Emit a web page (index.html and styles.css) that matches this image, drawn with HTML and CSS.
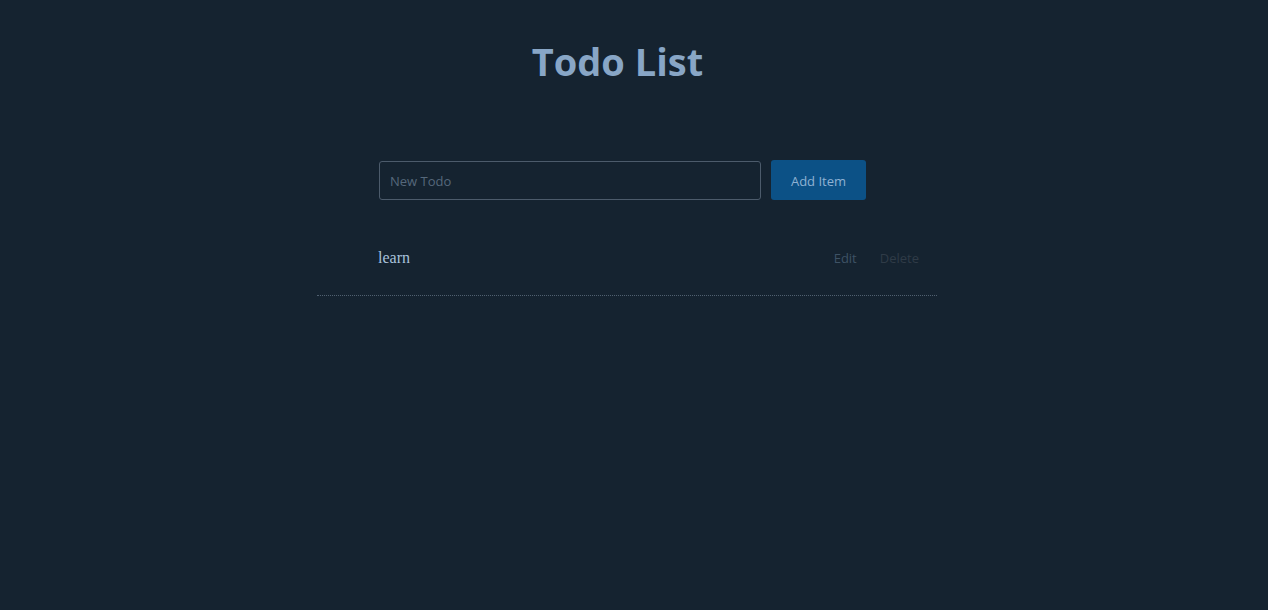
FILE: index.html
```html
<!DOCTYPE html>
<html lang="en">
<head>
<meta charset="utf-8">
<title>Todo List</title>
<link rel="stylesheet" href="styles.css">
</head>
<body>
<main class="app">
  <h1 class="title">Todo List</h1>
  <form class="add-form">
    <input class="add-input" type="text" placeholder="New Todo">
    <button class="add-btn" type="button">Add Item</button>
  </form>
  <ul class="todo-list">
    <li class="todo-item">
      <span class="todo-text">learn</span>
      <div class="todo-actions">
        <button class="link-btn edit" type="button">Edit</button>
        <button class="link-btn delete" type="button">Delete</button>
      </div>
    </li>
  </ul>
</main>
</body>
</html>
```
FILE: styles.css
```css
html, body {
  margin: 0;
  padding: 0;
  background: #152330;
  height: 100%;
}
body {
  font-family: "Open Sans", "Noto Sans", sans-serif;
}
.app {
  width: 620px;
  margin: 0 auto;
  padding-right: 14px;
}
.title {
  margin: 0;
  padding: 35px 19px 0 0;
  text-align: center;
  font-size: 38px;
  line-height: 52px;
  font-weight: 700;
  color: #88a6c6;
}
.add-form {
  display: flex;
  gap: 10px;
  margin: 73px 0 0 62px;
  align-items: center;
}
.add-input {
  box-sizing: border-box;
  width: 382px;
  height: 39px;
  padding: 2px 10px 0;
  background: #152330;
  border: 1px solid #4c5b6b;
  border-radius: 3px;
  color: #a8c0d8;
  font-family: "Open Sans", "Noto Sans", sans-serif;
  font-size: 13px;
  outline: none;
}
.add-input::placeholder {
  color: #55687b;
}
.add-btn {
  box-sizing: border-box;
  width: 95px;
  height: 40px;
  padding-top: 2px;
  background: #0c5186;
  border: none;
  border-radius: 3px;
  color: #8fb1d3;
  font-family: "Open Sans", "Noto Sans", sans-serif;
  font-size: 13px;
}
.todo-list {
  list-style: none;
  margin: 40px 0 0;
  padding: 0;
}
.todo-item {
  display: flex;
  align-items: center;
  justify-content: space-between;
  padding: 9px 18px 28px 61px;
  border-bottom: 1px dotted #506070;
}
.todo-text {
  font-family: "Liberation Serif", "DejaVu Serif", serif;
  font-size: 16px;
  color: #a9c2dc;
}
.todo-actions {
  display: flex;
  gap: 23px;
}
.link-btn {
  background: none;
  border: none;
  padding: 0;
  font-family: "Open Sans", "Noto Sans", sans-serif;
  font-size: 13px;
}
.edit { color: #3e5265; }
.delete { color: #2f3b47; }
```
